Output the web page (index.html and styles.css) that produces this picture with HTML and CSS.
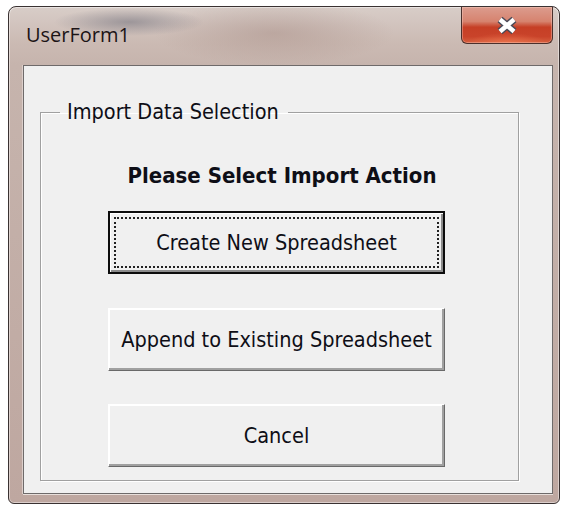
FILE: index.html
```html
<!DOCTYPE html>
<html lang="en">
<head>
<meta charset="utf-8">
<title>UserForm1</title>
<link rel="stylesheet" href="styles.css">
</head>
<body>
<div class="window">
  <div class="titlebar">
    <span class="title">UserForm1</span>
    <button class="close" type="button" aria-label="Close">
      <svg width="24" height="19" viewBox="0 0 24 19" aria-hidden="true">
        <path d="M5 3.5 L19 15.5 M19 3.5 L5 15.5" fill="none" stroke="#4a4a58" stroke-width="7.5"/>
        <path d="M5 3.5 L19 15.5 M19 3.5 L5 15.5" fill="none" stroke="#ffffff" stroke-width="4.5"/>
      </svg>
    </button>
  </div>
  <div class="client">
    <fieldset class="group">
      <legend>Import Data Selection</legend>
      <p class="prompt">Please Select Import Action</p>
      <button class="btn btn-default" type="button">Create New Spreadsheet</button>
      <button class="btn" type="button">Append to Existing Spreadsheet</button>
      <button class="btn" type="button">Cancel</button>
    </fieldset>
  </div>
</div>
</body>
</html>
```
FILE: styles.css
```css
html, body {
  margin: 0;
  background: #ffffff;
}

/* Aero-style window frame */
.window {
  box-sizing: border-box;
  width: 552px;
  height: 498px;
  margin: 6px 0 0 8px;
  padding: 0 6px 9px 14px;
  display: flex;
  flex-direction: column;
  border: 1px solid #3a3232;
  border-radius: 8px 8px 6px 6px;
  box-shadow: inset 0 0 0 1px rgba(255, 255, 255, 0.45);
  background:
    radial-gradient(ellipse 75px 14px at 120px 15px, rgba(120, 118, 128, 0.6), rgba(120, 118, 128, 0) 100%),
    radial-gradient(ellipse 120px 32px at 265px 26px, rgba(165, 138, 130, 0.45), rgba(165, 138, 130, 0) 100%),
    linear-gradient(180deg, #d8cdc8 0, #cbbab3 36px, #c6b4ad 58px, #bea7a0 100%);
}

.titlebar {
  height: 58px;
  flex: none;
  display: flex;
  align-items: flex-start;
  justify-content: space-between;
}

.title {
  margin: 16px 0 0 3px;
  font: 20px/24px "Open Sans", "Noto Sans", sans-serif;
  color: #1c1416;
}

/* red caption close button */
.close {
  width: 92px;
  height: 37px;
  margin: 0;
  padding: 0;
  display: flex;
  align-items: center;
  justify-content: center;
  border: 1px solid #4a302c;
  border-top: none;
  border-radius: 0 0 6px 6px;
  box-shadow: inset 0 0 0 1px rgba(255, 220, 210, 0.35);
  background:
    radial-gradient(ellipse 40px 10px at 50% 100%, rgba(240, 120, 80, 0.7), rgba(240, 120, 80, 0)),
    linear-gradient(180deg, #dc9c8e 0%, #d6836f 40%, #c63f26 56%, #c9432a 82%, #d6603f 100%);
}

.close svg {
  display: block;
}

/* form client area */
.client {
  flex: 1;
  display: flex;
  background: #f0f0f0;
  border: 1px solid #6e6a6a;
  box-shadow: 0 1px 0 #e8dfdb, -1px 0 0 #dccfcb;
}

.group {
  flex: 1;
  min-width: 0;
  margin: 34px 33px 12px 16px;
  padding: 0;
  border: 1px solid #a0a0a0;
  box-shadow: 1px 1px 0 #ffffff, inset 1px 1px 0 #ffffff;
  font-family: "DejaVu Sans Condensed", "DejaVu Sans", sans-serif;
  color: #0e0e16;
}

.group legend {
  margin-left: 19px;
  padding: 0 9px 0 7px;
  font-size: 21.5px;
  line-height: 24px;
}

.prompt {
  margin: 40px 0 0;
  padding-left: 5px;
  text-align: center;
  font-size: 22px;
  font-weight: bold;
  line-height: 24px;
}

.btn {
  display: block;
  box-sizing: border-box;
  width: 337px;
  height: 63px;
  margin: 34px 0 0 67px;
  padding: 0;
  font: 21.5px "DejaVu Sans Condensed", "DejaVu Sans", sans-serif;
  color: #0e0e16;
  background: #f0f0f0;
  border: 1px solid;
  border-color: #ffffff #696969 #696969 #ffffff;
  box-shadow: inset -2px -2px 0 #a0a0a0, inset 1px 1px 0 #ffffff;
}

.btn + .btn + .btn {
  margin-top: 33px;
}

/* default button with focus rectangle */
.btn-default {
  margin-top: 23px;
  border: 2px solid #0c0c0c;
  box-shadow: inset 1px 1px 0 #ffffff, inset -2px -2px 0 #8c8c8c;
  outline: 2px dotted #222222;
  outline-offset: -8px;
}
```
